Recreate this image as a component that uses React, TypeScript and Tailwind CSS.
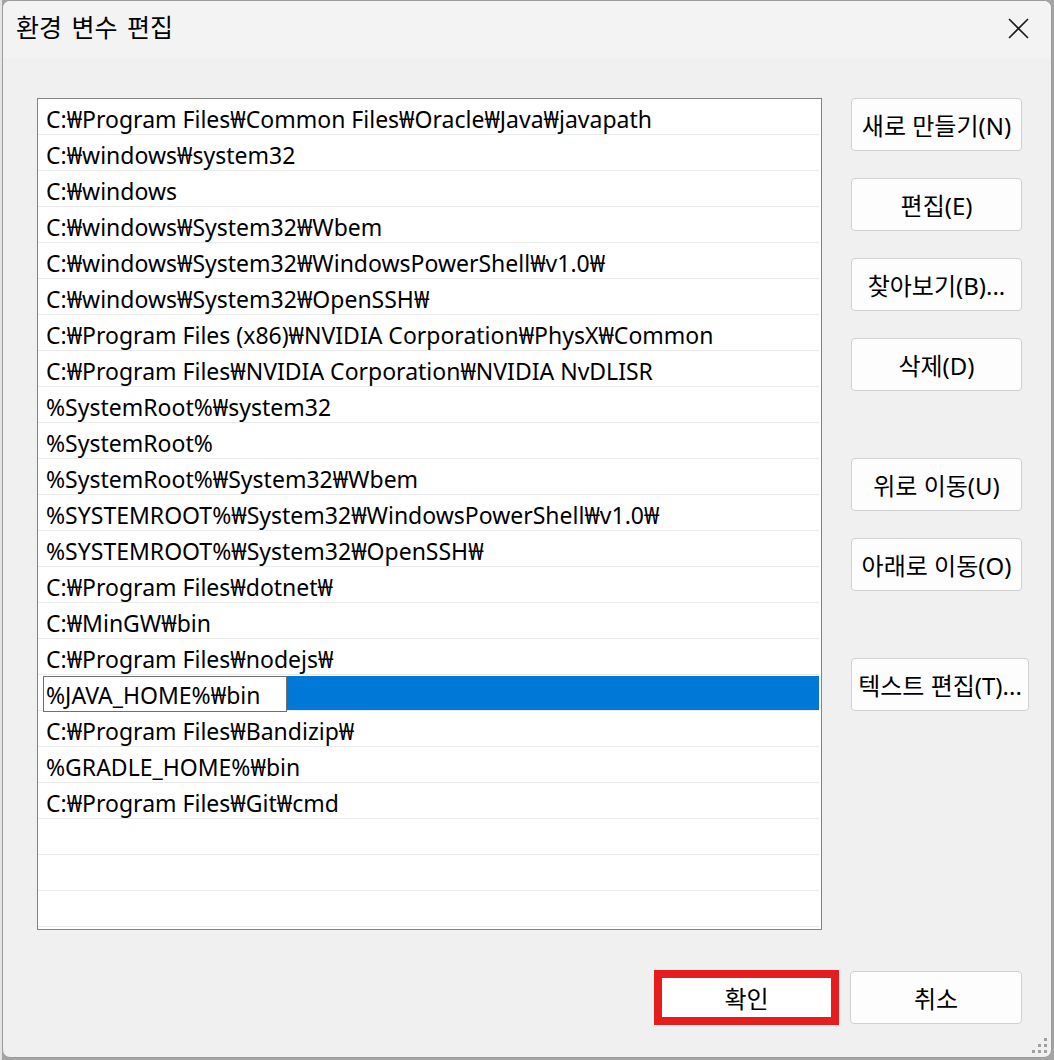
import React from "react";

const paths = [
  "C:₩Program Files₩Common Files₩Oracle₩Java₩javapath",
  "C:₩windows₩system32",
  "C:₩windows",
  "C:₩windows₩System32₩Wbem",
  "C:₩windows₩System32₩WindowsPowerShell₩v1.0₩",
  "C:₩windows₩System32₩OpenSSH₩",
  "C:₩Program Files (x86)₩NVIDIA Corporation₩PhysX₩Common",
  "C:₩Program Files₩NVIDIA Corporation₩NVIDIA NvDLISR",
  "%SystemRoot%₩system32",
  "%SystemRoot%",
  "%SystemRoot%₩System32₩Wbem",
  "%SYSTEMROOT%₩System32₩WindowsPowerShell₩v1.0₩",
  "%SYSTEMROOT%₩System32₩OpenSSH₩",
  "C:₩Program Files₩dotnet₩",
  "C:₩MinGW₩bin",
  "C:₩Program Files₩nodejs₩",
  "%JAVA_HOME%₩bin",
  "C:₩Program Files₩Bandizip₩",
  "%GRADLE_HOME%₩bin",
  "C:₩Program Files₩Git₩cmd",
  "",
  "",
  "",
];

const SELECTED = 16;

const SideButton = ({ label, wide }: { label: string; wide?: boolean }) => (
  <button
    className={`h-[53px] ${wide ? "w-[178px]" : "w-[171px]"} pt-[2px] rounded-[4px] border border-[#d0d0d0] bg-[#fdfdfd] text-[24px] leading-[30px] text-black whitespace-nowrap`}
  >
    {label}
  </button>
);

export default function App() {
  return (
    <div className="w-[1054px] h-[1060px] bg-[#a4a4a4] font-['Segoe_UI','Noto_Sans','Noto_Sans_CJK_KR',sans-serif] overflow-hidden flex">
      <div className="w-[2px] h-full bg-[#e4e4e4]" />
      <div className="relative w-[1050px] h-[1058px] rounded-[8px] border border-[#9a9a9a] bg-[#f0f0f0] overflow-hidden flex flex-col">
        {/* Title bar */}
        <div className="h-[57px] bg-[#f3f3f3] flex items-center justify-between pl-[13px] pr-[22px]">
          <span className="text-[25px] text-black mt-[-3px] [word-spacing:3px]">환경 변수 편집</span>
          <svg width="21" height="21" viewBox="0 0 21 21" className="mt-[-3px]">
            <path d="M1 1 L20 20 M20 1 L1 20" stroke="#1b1b1b" strokeWidth="1.6" />
          </svg>
        </div>

        {/* Body */}
        <div className="flex pl-[34px] pt-[40px]">
          <div className="w-[785px] h-[832px] border border-[#838383] bg-white flex flex-col">
            {paths.map((p, i) => (
              <div key={i} className="h-[36px] shrink-0 flex flex-col">
                {i === SELECTED ? (
                  <div className="h-[35px] flex">
                    <div className="ml-[5px] mt-[1px] w-[244px] h-[36px] border border-[#6f6f6f] bg-white text-[23px] leading-[32px] pt-[2px] pl-[2px] text-black z-10 whitespace-nowrap overflow-hidden">
                      {p}
                    </div>
                    <div className="flex-1 mt-[1px] mr-[2px] h-[35px] bg-[#0078d7]" />
                  </div>
                ) : (
                  <div className="h-[35px] pl-[8px] pt-[6px] text-[23px] leading-[29px] text-black whitespace-nowrap overflow-hidden">
                    {p}
                  </div>
                )}
                <div className="h-[1px] mr-[2px] bg-[#ebebeb]" />
              </div>
            ))}
          </div>

          <div className="ml-[29px] flex flex-col">
            <SideButton label="새로 만들기(N)" />
            <div className="h-[27px]" />
            <SideButton label="편집(E)" />
            <div className="h-[27px]" />
            <SideButton label="찾아보기(B)..." />
            <div className="h-[27px]" />
            <SideButton label="삭제(D)" />
            <div className="h-[67px]" />
            <SideButton label="위로 이동(U)" />
            <div className="h-[27px]" />
            <SideButton label="아래로 이동(O)" />
            <div className="h-[67px]" />
            <SideButton label="텍스트 편집(T)..." wide />
          </div>
        </div>

        {/* Footer buttons */}
        <div className="flex pl-[651px] pt-[40px]">
          <div className="w-[185px] h-[55px] pt-[2px] border-[8px] border-[#e51d1f] bg-white flex items-center justify-center text-[24px] text-black">
            확인
          </div>
          <button className="ml-[11px] mt-[1px] pt-[2px] w-[172px] h-[53px] rounded-[4px] border border-[#d0d0d0] bg-[#fdfdfd] text-[24px] text-black">
            취소
          </button>
        </div>

        {/* Resize grip */}
        <div className="absolute right-[4px] bottom-[4px] z-20 grid grid-cols-3 gap-[3px]">
          <span className="w-[3px] h-[3px]" />
          <span className="w-[3px] h-[3px]" />
          <span className="w-[3px] h-[3px] bg-[#a0a0a0]" />
          <span className="w-[3px] h-[3px]" />
          <span className="w-[3px] h-[3px] bg-[#a0a0a0]" />
          <span className="w-[3px] h-[3px] bg-[#a0a0a0]" />
          <span className="w-[3px] h-[3px] bg-[#a0a0a0]" />
          <span className="w-[3px] h-[3px] bg-[#a0a0a0]" />
          <span className="w-[3px] h-[3px] bg-[#a0a0a0]" />
        </div>
      </div>
    </div>
  );
}
